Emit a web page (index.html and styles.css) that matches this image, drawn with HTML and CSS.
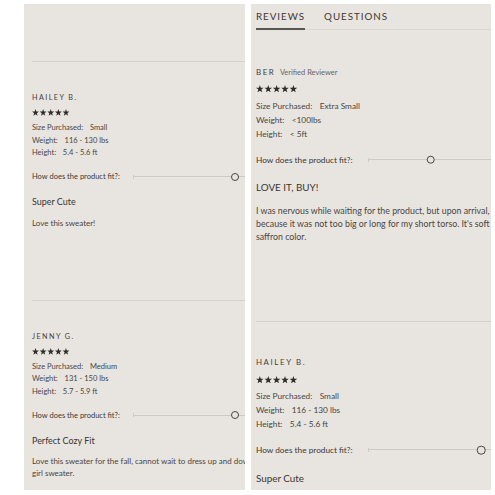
FILE: index.html
```html
<!DOCTYPE html>
<html lang="en">
<head>
<meta charset="utf-8">
<title>Reviews</title>
<link rel="stylesheet" href="styles.css">
</head>
<body>
<svg class="defs" width="0" height="0" aria-hidden="true">
  <symbol id="star" viewBox="0 0 7 7">
    <polygon points="3.5,0.1 4.35,2.53 6.92,2.59 4.88,4.15 5.62,6.61 3.5,5.15 1.38,6.61 2.12,4.15 0.08,2.59 2.65,2.53"/>
  </symbol>
</svg>
<main class="page">
  <section class="panel panel-left">
    <div class="lead"></div>
    <article class="review">
      <div class="name-row"><span class="name">Hailey B.</span></div>
      <svg class="stars" viewBox="0 0 37.5 7" aria-label="5 stars"><use href="#star" x="0" width="7" height="7"/><use href="#star" x="7.6" width="7" height="7"/><use href="#star" x="15.2" width="7" height="7"/><use href="#star" x="22.8" width="7" height="7"/><use href="#star" x="30.4" width="7" height="7"/></svg>
      <ul class="info">
        <li><span class="label">Size Purchased:</span><span class="value">Small</span></li>
        <li><span class="label">Weight:</span><span class="value">116 - 130 lbs</span></li>
        <li><span class="label">Height:</span><span class="value">5.4 - 5.6 ft</span></li>
      </ul>
      <div class="fit">
        <span class="fit-label">How does the product fit?:</span>
        <div class="slider"><span class="knob" style="left:85%"></span></div>
      </div>
      <h3 class="title">Super Cute</h3>
      <p class="body">Love this sweater!</p>
    </article>
    <article class="review">
      <div class="name-row"><span class="name">Jenny G.</span></div>
      <svg class="stars" viewBox="0 0 37.5 7" aria-label="5 stars"><use href="#star" x="0" width="7" height="7"/><use href="#star" x="7.6" width="7" height="7"/><use href="#star" x="15.2" width="7" height="7"/><use href="#star" x="22.8" width="7" height="7"/><use href="#star" x="30.4" width="7" height="7"/></svg>
      <ul class="info">
        <li><span class="label">Size Purchased:</span><span class="value">Medium</span></li>
        <li><span class="label">Weight:</span><span class="value">131 - 150 lbs</span></li>
        <li><span class="label">Height:</span><span class="value">5.7 - 5.9 ft</span></li>
      </ul>
      <div class="fit">
        <span class="fit-label">How does the product fit?:</span>
        <div class="slider"><span class="knob" style="left:85%"></span></div>
      </div>
      <h3 class="title">Perfect Cozy Fit</h3>
      <p class="body">Love this sweater for the fall, cannot wait to dress up and down this<br>girl sweater.</p>
    </article>
  </section>

  <section class="panel panel-right">
    <nav class="tabs">
      <span class="tab tab-active">Reviews</span>
      <span class="tab">Questions</span>
    </nav>
    <article class="review review-first">
      <div class="name-row"><span class="name">Ber</span><span class="verified">Verified Reviewer</span></div>
      <svg class="stars" viewBox="0 0 37.5 7" aria-label="5 stars"><use href="#star" x="0" width="7" height="7"/><use href="#star" x="7.6" width="7" height="7"/><use href="#star" x="15.2" width="7" height="7"/><use href="#star" x="22.8" width="7" height="7"/><use href="#star" x="30.4" width="7" height="7"/></svg>
      <ul class="info">
        <li><span class="label">Size Purchased:</span><span class="value">Extra Small</span></li>
        <li><span class="label">Weight:</span><span class="value">&lt;100lbs</span></li>
        <li><span class="label">Height:</span><span class="value">&lt; 5ft</span></li>
      </ul>
      <div class="fit">
        <span class="fit-label">How does the product fit?:</span>
        <div class="slider"><span class="knob" style="left:48%"></span></div>
      </div>
      <h3 class="title title-caps">LOVE IT, BUY!</h3>
      <p class="body">I was nervous while waiting for the product, but upon arrival, I was so happy<br>because it was not too big or long for my short torso. It's soft and a beautiful<br>saffron color.</p>
    </article>
    <article class="review">
      <div class="name-row"><span class="name">Hailey B.</span></div>
      <svg class="stars" viewBox="0 0 37.5 7" aria-label="5 stars"><use href="#star" x="0" width="7" height="7"/><use href="#star" x="7.6" width="7" height="7"/><use href="#star" x="15.2" width="7" height="7"/><use href="#star" x="22.8" width="7" height="7"/><use href="#star" x="30.4" width="7" height="7"/></svg>
      <ul class="info">
        <li><span class="label">Size Purchased:</span><span class="value">Small</span></li>
        <li><span class="label">Weight:</span><span class="value">116 - 130 lbs</span></li>
        <li><span class="label">Height:</span><span class="value">5.4 - 5.6 ft</span></li>
      </ul>
      <div class="fit">
        <span class="fit-label">How does the product fit?:</span>
        <div class="slider"><span class="knob" style="left:86%"></span></div>
      </div>
      <h3 class="title">Super Cute</h3>
    </article>
  </section>
</main>
</body>
</html>
```

FILE: styles.css
```css
html, body {
  margin: 0;
  background: #ffffff;
}

body {
  font-family: Lato, "Open Sans", sans-serif;
  color: #4a4643;
}

.defs {
  position: absolute;
  width: 0;
  height: 0;
}

.page {
  display: flex;
  gap: 6px;
  padding: 4px 0 0 24px;
  height: 495px;
  box-sizing: border-box;
}

.panel {
  background: #e8e4df;
  height: 486px;
  overflow: hidden;
  box-sizing: border-box;
  flex: none;
}

.panel-left {
  width: 221px;
  font-size: 8px;
  padding-left: 8px;
}

.panel-right {
  width: 240px;
  font-size: 8.8px;
  padding-left: 5px;
}

.lead {
  height: 57px;
}

/* tabs */
.tabs {
  display: flex;
  gap: 19px;
  padding-top: 5px;
  border-bottom: 1px solid #d9d5cf;
  margin-right: -10px;
}

.tab {
  font-size: 9.8px;
  line-height: 14px;
  letter-spacing: 0.1em;
  text-transform: uppercase;
  color: #3d3936;
  padding-bottom: 5px;
  margin-bottom: -1px;
  border-bottom: 2px solid transparent;
}

.tab-active {
  border-bottom-color: #5a5551;
}

/* review */
.review {
  border-top: 1px solid #d4d0ca;
  padding: 3.9em 0 8.85em;
  white-space: nowrap;
  margin-right: -200px;
}

.panel-right .review-first {
  border-top: 0;
  padding-top: 4.15em;
}

.name-row {
  display: flex;
  align-items: baseline;
  line-height: 1.25em;
  height: 1.25em;
}

.name {
  font-size: 0.9em;
  letter-spacing: 0.2em;
  text-transform: uppercase;
  color: #45413e;
}

.verified {
  font-size: 0.85em;
  margin-left: 0.6em;
  color: #6a6561;
}

.stars {
  display: block;
  width: 4.7em;
  height: 0.88em;
  margin-top: 0.75em;
  fill: #2f2c2a;
}

.panel-right .stars {
  margin-top: 0.9em;
}

.info {
  list-style: none;
  margin: 0.82em 0 0;
  padding: 0;
  font-size: 0.94em;
  line-height: 1.667em;
  color: #4a4643;
}

.value {
  margin-left: 0.9em;
}

.fit {
  display: flex;
  align-items: center;
  height: 1.25em;
  margin-top: 1.48em;
}

.fit-label {
  font-size: 0.94em;
  color: #3c3835;
}

.slider {
  position: relative;
  flex: none;
  width: 15em;
  height: 1em;
  margin-left: 1.7em;
  background:
    linear-gradient(#cdc9c3, #cdc9c3) left center / 100% 1px no-repeat;
}

.slider::before {
  content: "";
  position: absolute;
  left: 0;
  top: 50%;
  width: 1px;
  height: 4px;
  margin-top: -2px;
  background: #cdc9c3;
}

.knob {
  position: absolute;
  top: 50%;
  width: 0.75em;
  height: 0.75em;
  border: 1.2px solid #4a4643;
  border-radius: 50%;
  background: #e8e4df;
  transform: translate(-50%, -50%);
}

.title {
  margin: 1.74em 0 0;
  font-size: 1.12em;
  line-height: 1.2em;
  font-weight: 400;
  color: #3a3633;
}

.title-caps {
  letter-spacing: 0;
}

.body {
  margin: 1.08em 0 0;
  font-size: 1em;
  line-height: 1.5em;
  color: #4a4643;
}
```
